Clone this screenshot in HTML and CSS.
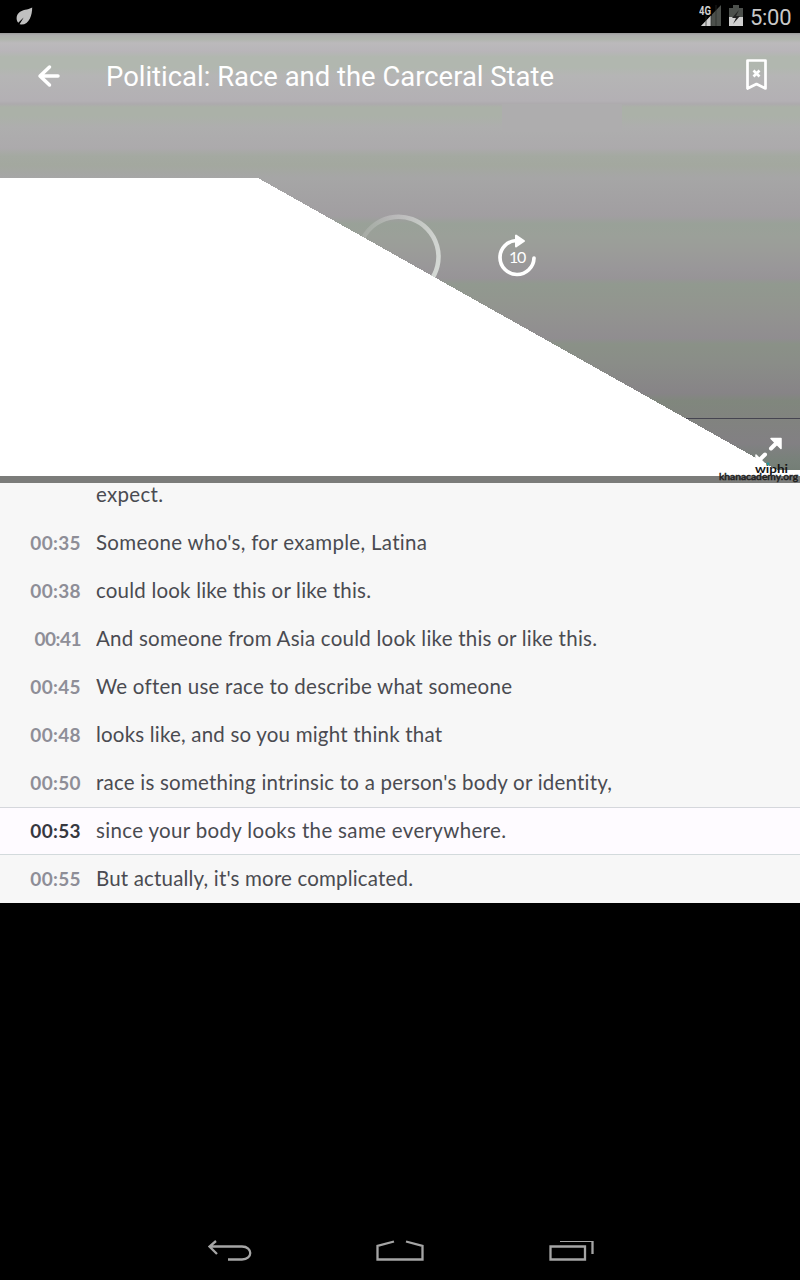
FILE: index.html
```
<!DOCTYPE html>
<html lang="en">
<head>
<meta charset="utf-8">
<title>Political: Race and the Carceral State</title>
<link rel="stylesheet" href="styles.css">
</head>
<body>
<header class="status">
  <svg class="leaf" width="18" height="19" viewBox="0 0 20 20"><path d="M18 0C18 8 15 19 6 19L4 18.500L8.500 11L2.500 17C0 14 0 9 3 6C7 2 13 3 18 0Z" fill="#c0c0c0"/></svg>
  <div class="status-right">
    <svg width="23" height="22" viewBox="0 0 23 22"><path d="M22 0V21H2Z" fill="#4c504c"/><path d="M12 10.500V21H2Z" fill="#d0d0d0"/><path d="M12 0V21M17 0V21M7 0V21" stroke="#292c29" stroke-width=".7"/><rect width="13" height="10.500" fill="#000"/><text x="0" y="10" class="network" textLength="12" lengthAdjust="spacingAndGlyphs">4G</text></svg>
    <svg width="14" height="22" viewBox="0 0 14 22"><path d="M4 0H10V3H14V21H0V3H4Z" fill="#4c504c"/><path d="M0 12H14V21H0Z" fill="#d0d0d0"/><path d="M10 5L3 13H7L4 19L11 11H7Z" fill="#222"/></svg>
    <span class="clock">5:00</span>
  </div>
</header>
<main>
  <section class="video">
    <svg class="scene" width="800" height="450" viewBox="0 33 800 450">
      <rect class="patch" x="502" y="104" width="120" height="28"/>
      <defs><linearGradient id="fade" gradientUnits="userSpaceOnUse" x1="360" y1="235" x2="440" y2="260"><stop stop-color="#ddd" stop-opacity=".15"/><stop offset="1" stop-color="#d4d8d4"/></linearGradient></defs>
      <path d="M358.500 256A40 40 0 1 1 429.500 282" fill="none" stroke="url(#fade)" stroke-width="4.500"/>
      <path d="M685 418.500H800" stroke="#454450"/>
      <path d="M0 178H258L777.500 470H800V476H0Z" fill="#fff" shape-rendering="crispEdges"/>
      <rect x="0" y="476" width="800" height="7" fill="#7b7c7a"/>
      <g fill="none" stroke="#fff" stroke-linecap="round">
        <path d="M516.500 240.500A17 17 0 1 0 534 258" stroke-width="3.700"/>
        <path d="M516 235.500V246.500L524 241Z" fill="#fff" stroke-width="2" stroke-linejoin="round"/>
        <path d="M771 448.500L777 442.500M759 460.500L765 454.500" stroke-width="4"/>
        <path d="M771 438.500H781V448.500Z" fill="#fff" stroke-width="1.500" stroke-linejoin="round"/>
        <path d="M756 455V464H765Z" fill="#fff" stroke-width="1.500" stroke-linejoin="round"/>
      </g>
      <text class="ten" x="509" y="263">10</text>
      <text class="wiphi" x="755" y="472.500" textLength="33" lengthAdjust="spacingAndGlyphs">wiphi</text>
      <circle cx="768" cy="464" r="1.400" fill="#249a9c"/>
      <text class="khan" x="719" y="479.500" textLength="79" lengthAdjust="spacingAndGlyphs">khanacademy.org</text>
    </svg>
    <div class="toolbar">
      <svg class="back" width="24" height="24" viewBox="0 0 24 24"><path d="M13.500 3L4 12L13.500 21M5 12H22" fill="none" stroke="#fff" stroke-width="3.500" stroke-linecap="round" stroke-linejoin="round"/></svg>
      <h1><svg width="450" height="36"><text x="0" y="28" textLength="448" lengthAdjust="spacingAndGlyphs">Political: Race and the Carceral State</text></svg></h1>
      <svg class="bookmark" width="24" height="34" viewBox="0 1 24 34"><path d="M2.500 2.500H20.500V30.500L11.500 26L2.500 30.500Z" stroke-linejoin="round"/><path d="M8.500 12.500L14.500 18.500M14.500 12.500L8.500 18.500"/></svg>
    </div>
  </section>
  <section class="transcript">
    <div class="line first"><time></time><svg><text y="31" textLength="67">expect.</text></svg></div>
    <div class="line"><time>00:35</time><svg><text y="31" textLength="331">Someone who's, for example, Latina</text></svg></div>
    <div class="line"><time>00:38</time><svg><text y="31" textLength="275">could look like this or like this.</text></svg></div>
    <div class="line"><time class="narrow">00:41</time><svg><text y="31" textLength="501">And someone from Asia could look like this or like this.</text></svg></div>
    <div class="line"><time>00:45</time><svg><text y="31" textLength="416">We often use race to describe what someone</text></svg></div>
    <div class="line"><time>00:48</time><svg><text y="31" textLength="346">looks like, and so you might think that</text></svg></div>
    <div class="line"><time>00:50</time><svg><text y="31" textLength="516">race is something intrinsic to a person's body or identity,</text></svg></div>
    <div class="line active"><time>00:53</time><svg><text y="31" textLength="410">since your body looks the same everywhere.</text></svg></div>
    <div class="line"><time>00:55</time><svg><text y="31" textLength="317">But actually, it's more complicated.</text></svg></div>
  </section>
</main>
<nav class="navigation">
  <svg width="800" height="50" viewBox="0 1230 800 50" fill="none" stroke="#a5a5a5" stroke-width="2.300">
    <path d="M216 1241L209.500 1246.500L217 1254M211 1246.500H242C253 1246.500 253 1259.500 242 1259.500H228"/>
    <path d="M394 1241.500L377.500 1246V1259.500H422.500V1246L406 1241.500"/>
    <path d="M550.500 1246.500H585V1259.500H550.500ZM592.500 1241V1254"/><path d="M560 1241.500H593" stroke-width="1"/>
  </svg>
</nav>
</body>
</html>
```
FILE: styles.css
```
* { box-sizing: border-box; }
body { margin: 0; width: 800px; height: 1280px; background: #000; display: flex; flex-direction: column; overflow: hidden; font-family: Lato, "Open Sans", sans-serif; font-variant-ligatures: none; }
svg { display: block; flex: none; }
.status { height: 33px; display: flex; justify-content: space-between; padding: 5px 8px 0 16px; }
.leaf { margin-top: 2px; }
.status-right { display: flex; gap: 7px; color: #c8c8c8; }
.network { font: bold 12px Roboto, sans-serif; fill: #d0d0d0; }
.clock { font: 22px/25px Roboto, sans-serif; width: 42px; white-space: nowrap; letter-spacing: -.3px; }
.video { height: 450px; display: grid; background: linear-gradient(#999 0px, #adadad 2px, #b0b5ad 6px, #bbb9bb 10px, #b8b5b9 18px, #b1b7af 24px, #b1b7af 34px, #b5b5b5 43px, #b3b0b4 68px, #adaaad 71px, #abb1a8 74px, #abb1a8 83px, #aeaeae 94px, #acaaac 115px, #a4a9a1 123px, #a3a89f 132px, #a6a6a6 145px, #a19ea1 183px, #99a198 191px, #9ba099 203px, #9b9c99 218px, #999799 235px, #979497 245px, #91998f 251px, #92968f 268px, #929290 285px, #908d90 305px, #8a9187 311px, #8a8d88 330px, #878487 360px, #80877d 368px, #81837f 385px, #828083 410px, #78817a 427px, #747e76 437px); }
.scene, .toolbar { grid-area: 1 / 1; }
.patch { fill: #aeadae; }
.ten { font: 16px Lato, sans-serif; letter-spacing: -1.2px; fill: #fff; }
.wiphi { font: bold 12px Lato, sans-serif; fill: #151515; }
.khan { font: 10px Lato, sans-serif; fill: #222; stroke: #222; stroke-width: .5px; }
.toolbar { height: 86px; display: flex; align-items: center; padding: 0 31px 0 36px; }
h1 { margin: 0 0 0 46px; font: 28px Roboto, sans-serif; fill: #fff; }
.bookmark { margin-left: auto; fill: none; stroke: #fff; stroke-width: 2.7px; }
.transcript { height: 420px; background: #f7f7f7; overflow: hidden; }
.line { height: 48px; display: flex; gap: 15px; }
.line time { width: 81px; text-align: right; color: #8e8e97; font: bold 19px/48px Lato, sans-serif; letter-spacing: .35px; }
.line .narrow { letter-spacing: -.5px; }
.line svg { width: 690px; height: 48px; font-size: 20.5px; fill: #4a4b51; }
.first { margin-top: -12px; }
.active { background: #fefbff; box-shadow: inset 0 1px #d5d7dc, inset 0 -1px #d3dadc; }
.line.active time { color: #36383f; }
.navigation { margin-top: 327px; }
```
